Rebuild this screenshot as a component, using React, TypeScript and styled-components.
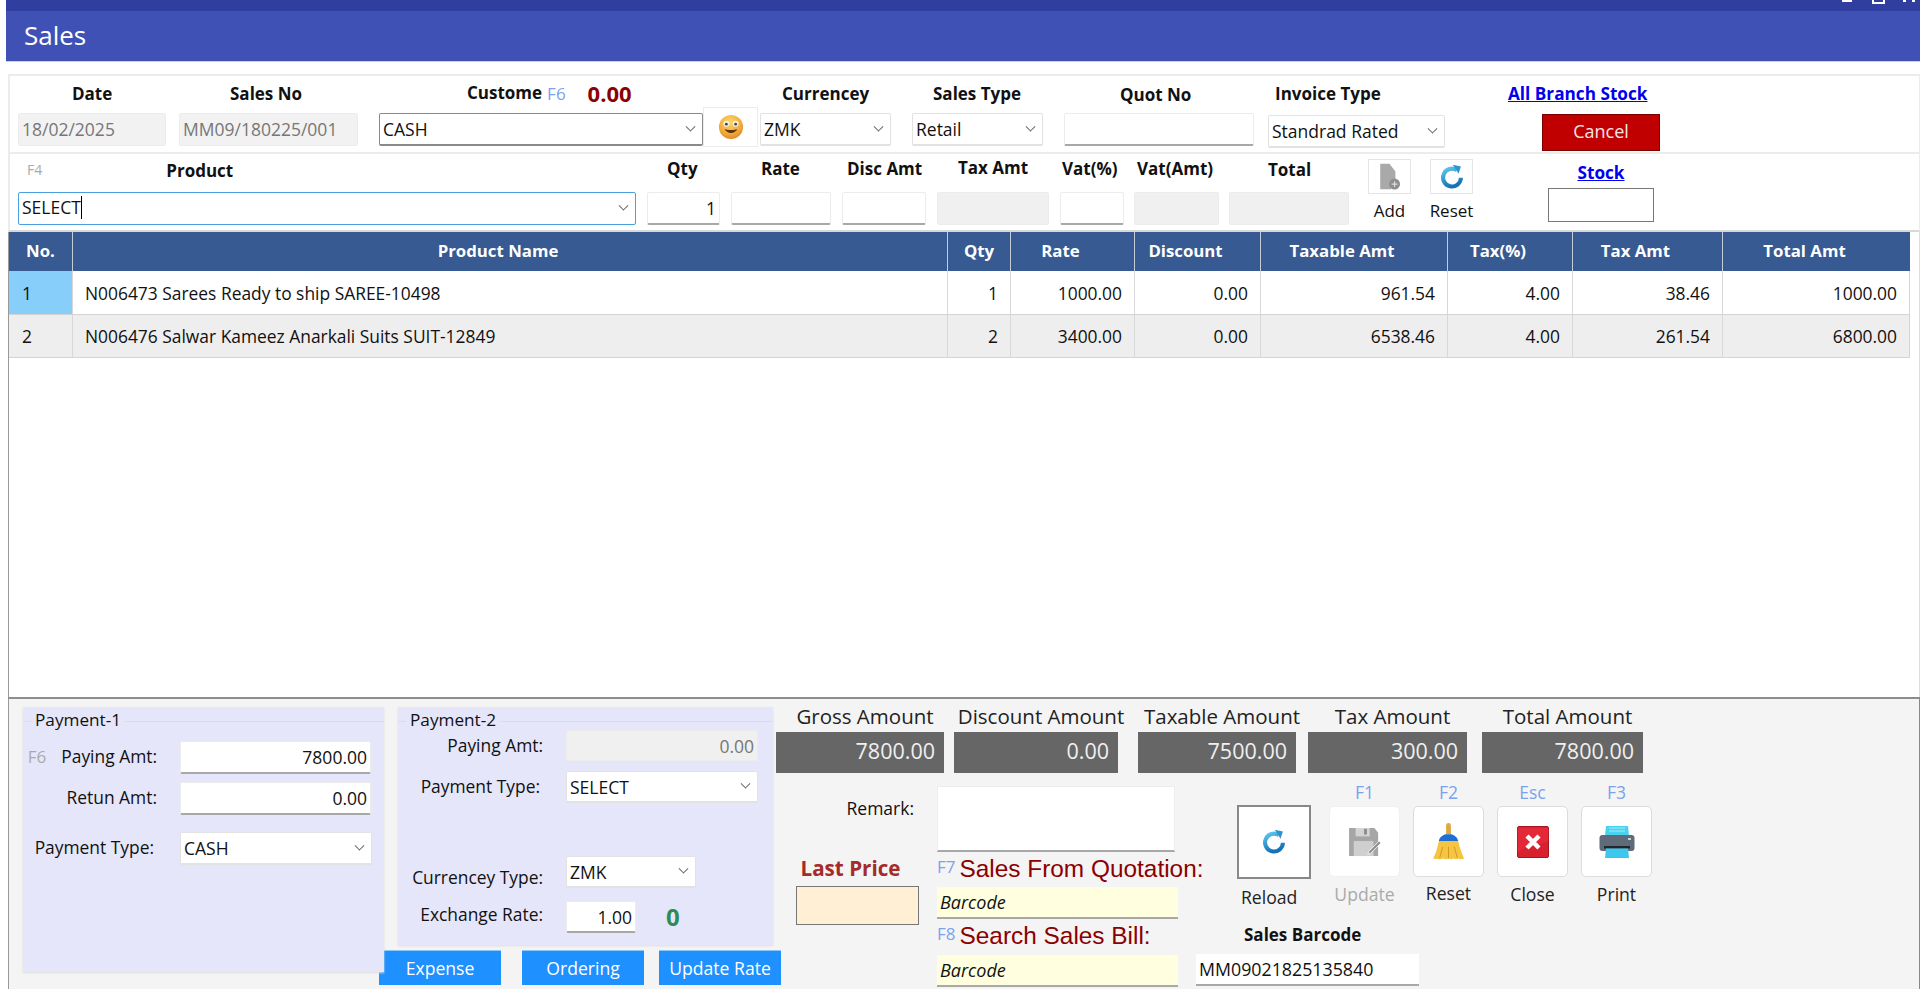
import React from "react";
import styled, { createGlobalStyle } from "styled-components";

const Global = createGlobalStyle`
  html, body { margin: 0; padding: 0; background: #fff; height: 989px; overflow: hidden; }
  * { box-sizing: border-box; }
  body { font-family: "Open Sans", "Noto Sans", sans-serif; color: #111; }
  #root { height: 989px; }
`;

const Page = styled.div`
  width: 1920px;
  height: 989px;
  overflow: hidden;
  padding-left: 6px;
  display: flex;
  flex-direction: column;
  position: relative;
`;
const TopStrip = styled.div`
  height: 11px;
  background: #303f9f;
  flex: none;
`;
const WindowGlyphs = styled.div`
  position: absolute;
  top: 0;
  right: 5px;
  display: flex;
  align-items: flex-start;
`;
const MinGlyph = styled.span`
  width: 10px;
  height: 2px;
  background: #fff;
`;
const MaxGlyph = styled.span`
  width: 13px;
  height: 4px;
  margin: 0 18px 0 20px;
  border: 2px solid #fff;
  border-top: 0;
`;
const CloseGlyph = styled.span`
  width: 12px;
  height: 2px;
  border: solid #fff;
  border-width: 0 3px;
`;
const Header = styled.div`
  height: 51px;
  flex: none;
  background: #3f51b5;
  border-bottom: 1px solid #c9d0ea;
  color: #fff;
  font-size: 26px;
  padding: 9px 0 0 18px;
  line-height: 30px;
`;
const Form = styled.div`
  margin: 12px 0 0 2px;
  flex: 1;
  display: flex;
  flex-direction: column;
  min-height: 0;
`;
const Row = styled.div<{ $h: number }>`
  height: ${(p) => p.$h}px;
  flex: none;
  border: 2px solid #ececec;
  border-right-width: 1px;
  position: relative;
  display: flex;
  padding-left: 8px;
`;
const SecondRow = styled(Row)`
  border-top: 0;
  border-bottom-width: 2px;
  border-bottom-color: #d8d8d8;
`;
const Field = styled.div<{ $w: number; $ml?: number }>`
  width: ${(p) => p.$w}px;
  margin-left: ${(p) => p.$ml ?? 0}px;
  flex: none;
  display: flex;
  flex-direction: column;
  align-items: stretch;
`;
const Label = styled.div<{ $h?: number; $dx?: number; $pt?: number }>`
  height: ${(p) => p.$h ?? 37}px;
  padding-top: ${(p) => p.$pt ?? 8}px;
  padding-left: ${(p) => p.$dx ?? 0}px;
  font-size: 17px;
  font-weight: 700;
  line-height: 20px;
  white-space: nowrap;
  display: flex;
  gap: 5px;
  align-items: baseline;
`;
const CustomerTitle = styled.span`
  transform: translateY(-1px);
`;
const HintBlue = styled.span`
  font-weight: 400;
  font-size: 17px;
  color: #7aa3ee;
`;
const HintGray = styled.span`
  font-weight: 400;
  font-size: 14px;
  color: #aaa;
`;
const ProductTitle = styled.span`
  margin-left: 119px;
  transform: translateY(2px);
`;
const Hot = styled.span`
  font-size: 22px;
  font-weight: 700;
  color: #8b0000;
  margin-left: 17px;
  transform: translateY(2px);
`;
const Input = styled.div<{ $tone?: string; $right?: boolean; $h?: number }>`
  height: ${(p) => p.$h ?? 33}px;
  background: ${(p) => p.$tone ?? "#fff"};
  border: 1px solid #ececec;
  border-bottom: ${(p) => (p.$tone ? "1px solid #ececec" : "2px solid #a8a8a8")};
  border-radius: 2px;
  font-size: 17.5px;
  line-height: 30px;
  padding: 0 3px;
  text-align: ${(p) => (p.$right ? "right" : "left")};
  white-space: nowrap;
  overflow: hidden;
  color: ${(p) => (p.$tone ? "#777" : "#111")};
`;
const SelectBox = styled.div<{ $mode?: "dark" | "focus" | "plain"; $h?: number }>`
  height: ${(p) => p.$h ?? 33}px;
  background: #fff;
  border: ${(p) =>
    p.$mode === "dark" ? "1px solid #8a8a8a" : p.$mode === "focus" ? "1px solid #4a9fe0" : "1px solid #e2e2e2"};
  border-bottom-width: ${(p) => (p.$mode === "focus" ? 1 : 2)}px;
  border-radius: 2px;
  display: flex;
  align-items: center;
  justify-content: space-between;
  font-size: 17.5px;
  padding: 0 8px 0 3px;
  white-space: nowrap;
`;
const Caret = styled.i`
  display: inline-block;
  width: 7px;
  height: 7px;
  border-right: 1px solid #666;
  border-bottom: 1px solid #666;
  transform: rotate(45deg) translate(-2px, -2px);
  flex: none;
`;
const EditingText = styled.span`
  display: inline-flex;
  align-items: center;
  line-height: 23px;
  height: 23px;
  transform: translateY(-1px);
`;
const TextCursor = styled.span`
  display: block;
  width: 1px;
  height: 23px;
  background: #000;
`;
const FaceButton = styled.div`
  width: 55px;
  height: 40px;
  margin-top: 31px;
  flex: none;
  background: #fff;
  border: 1px solid #ececec;
  display: flex;
  align-items: center;
  justify-content: center;
`;
const LinkLabel = styled.div<{ $mt: number }>`
  color: #0000ee;
  font-weight: 700;
  font-size: 17.2px;
  text-decoration: underline;
  white-space: nowrap;
  line-height: 20px;
  margin-top: ${(p) => p.$mt}px;
`;
const LinkCol = styled.div<{ $w: number; $ml: number; $center?: boolean }>`
  width: ${(p) => p.$w}px;
  margin-left: ${(p) => p.$ml}px;
  flex: none;
  display: flex;
  flex-direction: column;
  align-items: ${(p) => (p.$center ? "center" : "flex-start")};
`;
const CancelButton = styled.div`
  width: 118px;
  height: 37px;
  margin: 10px 0 0 34px;
  padding-bottom: 3px;
  background: #c00000;
  border: 1px solid #7a0000;
  color: #f5e6e6;
  font-size: 18px;
  display: flex;
  align-items: center;
  justify-content: center;
  flex: none;
`;
const StockBox = styled.div`
  width: 106px;
  height: 34px;
  margin-top: 5px;
  background: #fff;
  border: 1px solid #777;
  flex: none;
`;
const MiniCol = styled.div<{ $ml: number; $w: number }>`
  width: ${(p) => p.$w}px;
  margin-left: ${(p) => p.$ml}px;
  flex: none;
  display: flex;
  flex-direction: column;
  align-items: center;
  padding-top: 5px;
`;
const MiniBtn = styled.div`
  width: 43px;
  height: 35px;
  flex: none;
  border: 1px solid #e4e4e4;
  background: #fff;
  display: flex;
  align-items: center;
  justify-content: center;
`;
const MiniLabel = styled.div`
  font-size: 17px;
  line-height: 20px;
  margin-top: 7px;
`;

const TableArea = styled.div`
  flex: 1;
  min-height: 0;
  border-left: 1px solid #999;
  border-right: 1px solid #ddd;
  background: #fff;
`;
const Cols = "63px 875px 63px 124px 126px 187px 125px 150px 188px";
const TableRow = styled.div`
  display: grid;
  grid-template-columns: ${Cols};
`;
const Head = styled.div<{ $first?: boolean; $pr: number }>`
  height: 39px;
  background: #365a91;
  color: #fff;
  font-weight: 700;
  font-size: 16.8px;
  display: flex;
  align-items: center;
  justify-content: center;
  padding-right: ${(p) => p.$pr}px;
  border-left: ${(p) => (p.$first ? "0" : "1px solid #c4ccd8")};
  padding-bottom: 2px;
`;
const Cell = styled.div<{ $alt: boolean; $right?: boolean; $sel?: boolean }>`
  height: ${(p) => (p.$alt ? 43 : 44)}px;
  background: ${(p) => (p.$sel ? "#87cefa" : p.$alt ? "#eeeeee" : "#fff")};
  border-left: 1px solid #d8d8d8;
  border-bottom: 1px solid #d4d4d4;
  display: flex;
  align-items: center;
  justify-content: ${(p) => (p.$right ? "flex-end" : "flex-start")};
  padding: 0 12px;
  font-size: 17.4px;
  white-space: nowrap;
  &:last-child { border-right: 1px solid #d4d4d4; }
`;
const NoCell = styled(Cell)`
  padding-left: 13px;
  border-left: 0;
`;

const Bottom = styled.div`
  height: 292px;
  flex: none;
  background: #f4f4f4;
  border-top: 2px solid #8d8d8d;
  border-left: 1px solid #999;
  border-right: 1px solid #888;
  display: flex;
  padding: 8px 0 0 14px;
`;
const Fieldset = styled.div<{ $w: number; $h: number }>`
  width: ${(p) => p.$w}px;
  height: ${(p) => p.$h}px;
  flex: none;
  background: #e6e6fa;
  box-shadow: 0 1px 2px #ddd;
  position: relative;
  padding-top: 1px;
  &::before {
    content: "";
    position: absolute;
    left: 0;
    right: 0;
    top: 14px;
    border-top: 1px solid #dcdce4;
  }
`;
const Legend = styled.div`
  position: relative;
  display: inline-block;
  background: #e6e6fa;
  margin-left: 8px;
  padding: 0 4px;
  font-size: 17.2px;
  line-height: 24px;
  z-index: 1;
`;
const PayRow = styled.div<{ $top: number; $lw: number; $gap: number }>`
  display: flex;
  margin-top: ${(p) => p.$top}px;
  gap: ${(p) => p.$gap}px;
  & > :first-child { width: ${(p) => p.$lw}px; }
`;
const PayLabel = styled.div<{ $dy?: number }>`
  flex: none;
  display: flex;
  justify-content: flex-end;
  align-items: baseline;
  font-size: 17.4px;
  line-height: 32px;
  white-space: nowrap;
  transform: translateY(${(p) => p.$dy ?? -1}px);
`;
const FKey = styled.span`
  color: #aaa;
  font-size: 17px;
  margin-right: 15px;
`;
const PayCtl = styled.div<{ $w: number }>`
  width: ${(p) => p.$w}px;
  flex: none;
`;
const RateZero = styled.div`
  color: #2e8b57;
  font-weight: 700;
  font-size: 24px;
  line-height: 32px;
  margin-left: 7px;
`;
const PayCol = styled.div`
  margin-left: 14px;
  width: 375px;
  flex: none;
`;
const ActionRow = styled.div`
  display: flex;
  margin: 5px 0 0 -19px;
  gap: 21px;
  & > :last-child { margin-left: -6px; }
`;
const BlueBtn = styled.div`
  width: 122px;
  height: 35px;
  flex: none;
  background: #1e90ff;
  color: #fff;
  font-size: 17.6px;
  display: flex;
  align-items: center;
  justify-content: center;
  border-top: 1px solid #8fc6fa;
  white-space: nowrap;
`;
const RightArea = styled.div`
  margin-left: 3px;
  flex: none;
  width: 880px;
  display: flex;
  flex-direction: column;
  margin-top: -8px;
`;
const Amounts = styled.div`
  display: flex;
  height: 76px;
`;
const AmountCol = styled.div<{ $w: number; $ml: number }>`
  width: ${(p) => p.$w}px;
  margin-left: ${(p) => p.$ml}px;
  flex: none;
  display: flex;
  flex-direction: column;
`;
const AmountLabel = styled.div`
  display: flex;
  justify-content: center;
  padding-left: 10px;
  font-size: 20.5px;
  line-height: 34px;
  height: 33px;
  white-space: nowrap;
  color: #222;
`;
const AmountBox = styled.div`
  height: 41px;
  background: #666;
  color: #f0f0f0;
  font-size: 21.5px;
  text-align: right;
  line-height: 38px;
  padding-right: 9px;
`;
const Lower = styled.div`
  display: flex;
  position: relative;
`;
const LastCol = styled.div`
  width: 123px;
  margin-left: 20px;
  flex: none;
  display: flex;
  flex-direction: column;
`;
const RemarkLabel = styled.div`
  font-size: 17.5px;
  text-align: right;
  height: 20px;
  margin-top: 23px;
  padding-right: 5px;
  line-height: 20px;
`;
const LastLabel = styled.div`
  margin-top: 36px;
  padding-right: 14px;
  color: #a52a2a;
  font-weight: 700;
  font-size: 20.6px;
  line-height: 28px;
  height: 32px;
  text-align: center;
  white-space: nowrap;
`;
const LastBox = styled.div`
  height: 39px;
  background: #ffefd5;
  border: 1px solid #777;
`;
const MidCol = styled.div`
  margin-left: 18px;
  width: 259px;
  flex: none;
  display: flex;
  flex-direction: column;
`;
const RemarkBox = styled.div`
  width: 238px;
  height: 66px;
  margin-top: 11px;
  background: #fff;
  border: 1px solid #ededed;
  border-bottom: 2px solid #a8a8a8;
`;
const BigTitle = styled.div<{ $h: number }>`
  height: ${(p) => p.$h}px;
  display: flex;
  align-items: baseline;
  font-family: "Liberation Sans", Arial, sans-serif;
  font-size: 24.4px;
  color: #8b0000;
  white-space: nowrap;
  line-height: 34px;
`;
const BlueKey = styled.span`
  font-size: 17px;
  color: #7aa3ee;
  margin-right: 4px;
  font-family: "Open Sans", sans-serif;
  transform: translateY(-4px);
`;
const Yellow = styled.div`
  width: 241px;
  height: 32px;
  background: #ffffe0;
  border-bottom: 2px solid #a8a8a8;
  font-style: italic;
  font-size: 18px;
  line-height: 30px;
  padding-left: 3px;
`;
const RightStack = styled.div`
  flex: none;
  display: flex;
  flex-direction: column;
`;
const KeyButtons = styled.div`
  display: flex;
  margin: 0 0 0 41px;
  align-items: flex-start;
`;
const ReloadCol = styled.div`
  width: 74px;
  flex: none;
  padding-top: 30px;
`;
const Reload = styled.div`
  width: 74px;
  height: 74px;
  background: #fff;
  border: 2px solid #888;
  display: flex;
  align-items: center;
  justify-content: center;
`;
const KeyCol = styled.div<{ $ml: number }>`
  margin-left: ${(p) => p.$ml}px;
  width: 71px;
  flex: none;
  display: flex;
  flex-direction: column;
  align-items: center;
  padding-top: 6px;
`;
const KeyName = styled.div`
  font-size: 17.5px;
  color: #7aa3ee;
  line-height: 22px;
  height: 25px;
  white-space: nowrap;
`;
const KeyBtn = styled.div<{ $dim?: boolean }>`
  width: 71px;
  height: 71px;
  flex: none;
  background: #fff;
  border: 1px solid ${(p) => (p.$dim ? "#f0f0f0" : "#dcdcdc")};
  border-radius: 5px;
  display: flex;
  align-items: center;
  justify-content: center;
`;
const ButtonCaption = styled.div<{ $dim?: boolean; $mt: number; $pl?: number }>`
  font-size: 17.6px;
  color: ${(p) => (p.$dim ? "#aaa" : "#222")};
  margin-top: ${(p) => p.$mt}px;
  padding-left: ${(p) => p.$pl ?? 0}px;
  line-height: 20px;
`;
const BarcodeTitle = styled.div`
  font-size: 17px;
  font-weight: 700;
  margin: 18px 0 0 48px;
  height: 20px;
  line-height: 20px;
`;
const BarcodeInput = styled.div`
  width: 223px;
  height: 32px;
  margin-top: 9px;
  padding-left: 3px;
  background: #fff;
  border-bottom: 2px solid #a8a8a8;
  font-size: 17.8px;
  line-height: 30px;
  white-space: nowrap;
`;

const RefreshIcon = ({ id }: { id: string }) => (
  <svg width={26} height={26} viewBox="0 0 32 32">
    <defs>
      <linearGradient id={id} x1="0" y1="0" x2="0.4" y2="1">
        <stop offset="0" stopColor="#5cc6ee" />
        <stop offset="1" stopColor="#1673b8" />
      </linearGradient>
    </defs>
    <path d="M22 7.5A11 11 0 1 0 27 17" fill="none" stroke={`url(#${id})`} strokeWidth="5" />
    <path d="M17 1l10 2-3 9-3-5z" fill="#2f93cf" />
  </svg>
);
const DocAdd = () => (
  <svg width="23" height="27" viewBox="0 0 26 32">
    <path d="M2 1h11l7 9v13a8 8 0 0 0-5 8H2z" fill="#a9a9a9" />
    <circle cx="19" cy="25" r="6.5" fill="#8f8f8f" />
    <path d="M19 21.5v7M15.5 25h7" stroke="#ddd" strokeWidth="1.4" />
  </svg>
);
const Floppy = () => (
  <svg width="34" height="30" viewBox="0 0 36 32">
    <path d="M1 1h27l4 5v25H1z" fill="#a6a6a6" />
    <rect x="8" y="1" width="15" height="9" fill="#d4d4d4" />
    <rect x="17" y="2" width="3" height="6" fill="#8a8a8a" />
    <rect x="6" y="15" width="21" height="16" fill="#cfcfcf" />
    <path d="M22 26l11-11 2 2-11 11-3 1z" fill="#8e8e8e" stroke="#f2f2f2" strokeWidth="1" />
  </svg>
);
const Broom = () => (
  <svg width="33" height="40" viewBox="0 0 34 40">
    <path d="M14.5 12V3a2.5 2.5 0 0 1 5 0v9z" fill="#dfa93e" />
    <path d="M7 19c1-5 5-6 7-7h6c2 1 6 2 7 7z" fill="#1f6fd0" />
    <path d="M7 19h20c1 6 4 13 6 18-2 1-5 1-6 0-1 1-3 1-5 0-2 1-3 1-5 0-2 1-4 1-5 0-2 1-6 1-11 0 3-5 5-12 6-18z" fill="#f5c542" />
    <path d="M11 25l-3 11M17 25v12M23 25l3 11" stroke="#cf9525" strokeWidth="1" />
  </svg>
);
const CloseIcon = () => (
  <svg width="32" height="32" viewBox="0 0 32 32">
    <rect x="0.5" y="0.5" width="31" height="31" rx="1.5" fill="#d9202f" stroke="#a51622" />
    <path d="M0.5 2h31v13C20 20 10 20 .5 26z" fill="#ea3040" opacity=".6" />
    <path d="M10 10l12 12M22 10L10 22" stroke="#fff" strokeWidth="4.5" />
  </svg>
);
const Printer = () => (
  <svg width="36" height="34" viewBox="0 0 36 34">
    <path d="M7 1h22l1 10H6z" fill="#49d2ee" />
    <path d="M10 3h16M10 6h16" stroke="#a6ecf9" strokeWidth="1" />
    <rect x="0.5" y="10" width="35" height="16" rx="3" fill="#5f6b78" />
    <rect x="29" y="13" width="3" height="2" fill="#c7d3dc" />
    <rect x="5" y="21" width="26" height="2.5" fill="#20262c" />
    <path d="M7 23.5h22L30 33H6z" fill="#3cc7ec" />
  </svg>
);
const Face = () => (
  <svg width="26" height="26" viewBox="0 0 28 28">
    <defs>
      <radialGradient id="fc" cx="0.45" cy="0.3" r="0.8">
        <stop offset="0" stopColor="#fbd869" />
        <stop offset="0.6" stopColor="#f2a93c" />
        <stop offset="1" stopColor="#d97a1c" />
      </radialGradient>
    </defs>
    <circle cx="14" cy="14" r="13" fill="url(#fc)" />
    <circle cx="9" cy="10.5" r="3.2" fill="#f4f1e6" />
    <circle cx="19" cy="10.5" r="3.2" fill="#f4f1e6" />
    <circle cx="9" cy="11" r="1.5" fill="#444" />
    <circle cx="19" cy="11" r="1.5" fill="#444" />
    <path d="M8 17c3 4 9 4 12 0-3 1.2-9 1.2-12 0z" fill="#5a2d0c" stroke="#5a2d0c" />
  </svg>
);

const heads: [string, number][] = [
  ["No.", 0],
  ["Product Name", 24],
  ["Qty", 0],
  ["Rate", 24],
  ["Discount", 24],
  ["Taxable Amt", 24],
  ["Tax(%)", 24],
  ["Tax Amt", 24],
  ["Total Amt", 24],
];
const rows = [
  ["1", "N006473 Sarees Ready to ship SAREE-10498", "1", "1000.00", "0.00", "961.54", "4.00", "38.46", "1000.00"],
  ["2", "N006476 Salwar Kameez Anarkali Suits SUIT-12849", "2", "3400.00", "0.00", "6538.46", "4.00", "261.54", "6800.00"],
];
const amounts: [string, string, number, number][] = [
  ["Gross Amount", "7800.00", 168, 0],
  ["Discount Amount", "0.00", 164, 10],
  ["Taxable Amount", "7500.00", 158, 20],
  ["Tax Amount", "300.00", 159, 12],
  ["Total Amount", "7800.00", 161, 15],
];

export default function App() {
  return (
    <Page>
      <Global />
      <TopStrip />
      <WindowGlyphs>
        <MinGlyph />
        <MaxGlyph />
        <CloseGlyph />
      </WindowGlyphs>
      <Header>Sales</Header>
      <Form>
        <Row $h={80}>
          <Field $w={148}>
            <Label $dx={54}>Date</Label>
            <Input $tone="#f2f2f2">18/02/2025</Input>
          </Field>
          <Field $w={179} $ml={13}>
            <Label $dx={51}>Sales No</Label>
            <Input $tone="#f2f2f2">MM09/180225/001</Input>
          </Field>
          <Field $w={324} $ml={21}>
            <Label $dx={88} $pt={5}>
              <CustomerTitle>Custome</CustomerTitle>
              <HintBlue>F6</HintBlue>
              <Hot>0.00</Hot>
            </Label>
            <SelectBox $mode="dark">
              CASH
              <Caret />
            </SelectBox>
          </Field>
          <FaceButton>
            <Face />
          </FaceButton>
          <Field $w={131} $ml={2}>
            <Label $dx={22}>Currencey</Label>
            <SelectBox>
              ZMK
              <Caret />
            </SelectBox>
          </Field>
          <Field $w={131} $ml={21}>
            <Label $dx={21}>Sales Type</Label>
            <SelectBox>
              Retail
              <Caret />
            </SelectBox>
          </Field>
          <Field $w={190} $ml={21}>
            <Label $dx={56} $pt={9}>Quot No</Label>
            <Input />
          </Field>
          <Field $w={177} $ml={14}>
            <Label $h={39} $dx={7}>Invoice Type</Label>
            <SelectBox>
              Standrad Rated
              <Caret />
            </SelectBox>
          </Field>
          <LinkCol $w={152} $ml={63}>
            <LinkLabel $mt={8}>All Branch Stock</LinkLabel>
            <CancelButton>Cancel</CancelButton>
          </LinkCol>
        </Row>
        <SecondRow $h={78}>
          <Field $w={618}>
            <Label $h={38} $dx={9} $pt={5}>
              <HintGray>F4</HintGray>
              <ProductTitle>Product</ProductTitle>
            </Label>
            <SelectBox $mode="focus">
              <EditingText>
                SELECT
                <TextCursor />
              </EditingText>
              <Caret />
            </SelectBox>
          </Field>
          <Field $w={73} $ml={11}>
            <Label $h={38} $dx={20} $pt={5}>Qty</Label>
            <Input $right>1</Input>
          </Field>
          <Field $w={100} $ml={11}>
            <Label $h={38} $dx={30} $pt={5}>Rate</Label>
            <Input />
          </Field>
          <Field $w={84} $ml={11}>
            <Label $h={38} $dx={5} $pt={5}>Disc Amt</Label>
            <Input />
          </Field>
          <Field $w={112} $ml={11}>
            <Label $h={38} $dx={21} $pt={4}>Tax Amt</Label>
            <Input $tone="#f0f0f0" />
          </Field>
          <Field $w={64} $ml={11}>
            <Label $h={38} $dx={2} $pt={5}>Vat(%)</Label>
            <Input />
          </Field>
          <Field $w={85} $ml={10}>
            <Label $h={38} $dx={3} $pt={5}>Vat(Amt)</Label>
            <Input $tone="#f0f0f0" />
          </Field>
          <Field $w={120} $ml={10}>
            <Label $h={38} $dx={39} $pt={6}>Total</Label>
            <Input $tone="#f0f0f0" />
          </Field>
          <MiniCol $w={43} $ml={19}>
            <MiniBtn>
              <DocAdd />
            </MiniBtn>
            <MiniLabel>Add</MiniLabel>
          </MiniCol>
          <MiniCol $w={43} $ml={19}>
            <MiniBtn>
              <RefreshIcon id="rfa" />
            </MiniBtn>
            <MiniLabel>Reset</MiniLabel>
          </MiniCol>
          <LinkCol $w={106} $ml={75} $center>
            <LinkLabel $mt={9}>Stock</LinkLabel>
            <StockBox />
          </LinkCol>
        </SecondRow>
        <TableArea>
          <TableRow>
            {heads.map(([h, pr], i) => (
              <Head key={h} $first={i === 0} $pr={pr}>
                {h}
              </Head>
            ))}
          </TableRow>
          {rows.map((r, ri) => (
            <TableRow key={r[0]}>
              <NoCell $alt={ri === 1} $sel={ri === 0}>
                {r[0]}
              </NoCell>
              {r.slice(1).map((c, i) => (
                <Cell key={i} $alt={ri === 1} $right={i > 0}>
                  {c}
                </Cell>
              ))}
            </TableRow>
          ))}
        </TableArea>
        <Bottom>
          <Fieldset $w={361} $h={265}>
            <Legend>Payment-1</Legend>
            <PayRow $top={9} $lw={134} $gap={23}>
              <PayLabel>
                <FKey>F6</FKey>Paying Amt:
              </PayLabel>
              <PayCtl $w={191}>
                <Input $right>7800.00</Input>
              </PayCtl>
            </PayRow>
            <PayRow $top={8} $lw={134} $gap={23}>
              <PayLabel>Retun Amt:</PayLabel>
              <PayCtl $w={191}>
                <Input $right>0.00</Input>
              </PayCtl>
            </PayRow>
            <PayRow $top={17} $lw={131} $gap={26}>
              <PayLabel>Payment Type:</PayLabel>
              <PayCtl $w={192}>
                <SelectBox>
                  CASH
                  <Caret />
                </SelectBox>
              </PayCtl>
            </PayRow>
          </Fieldset>
          <PayCol>
            <Fieldset $w={375} $h={238}>
              <Legend>Payment-2</Legend>
              <PayRow $top={-2} $lw={145} $gap={23}>
                <PayLabel>Paying Amt:</PayLabel>
                <PayCtl $w={192}>
                  <Input $tone="#f0f0f0" $right $h={31}>0.00</Input>
                </PayCtl>
              </PayRow>
              <PayRow $top={9} $lw={142} $gap={26}>
                <PayLabel>Payment Type:</PayLabel>
                <PayCtl $w={192}>
                  <SelectBox $h={32}>
                    SELECT
                    <Caret />
                  </SelectBox>
                </PayCtl>
              </PayRow>
              <PayRow $top={53} $lw={145} $gap={23}>
                <PayLabel $dy={5}>Currencey Type:</PayLabel>
                <PayCtl $w={130}>
                  <SelectBox $h={32}>
                    ZMK
                    <Caret />
                  </SelectBox>
                </PayCtl>
              </PayRow>
              <PayRow $top={13} $lw={145} $gap={23}>
                <PayLabel $dy={-3}>Exchange Rate:</PayLabel>
                <PayCtl $w={70}>
                  <Input $right $h={32}>1.00</Input>
                </PayCtl>
                <RateZero>0</RateZero>
              </PayRow>
            </Fieldset>
            <ActionRow>
              <BlueBtn>Expense</BlueBtn>
              <BlueBtn>Ordering</BlueBtn>
              <BlueBtn>Update Rate</BlueBtn>
            </ActionRow>
          </PayCol>
          <RightArea>
            <Amounts>
              {amounts.map(([l, v, w, ml]) => (
                <AmountCol key={l} $w={w} $ml={ml}>
                  <AmountLabel>{l}</AmountLabel>
                  <AmountBox>{v}</AmountBox>
                </AmountCol>
              ))}
            </Amounts>
            <Lower>
              <LastCol>
                <RemarkLabel>Remark:</RemarkLabel>
                <LastLabel>Last Price</LastLabel>
                <LastBox />
              </LastCol>
              <MidCol>
                <RemarkBox />
                <BigTitle $h={35}>
                  <BlueKey>F7</BlueKey>Sales From Quotation:
                </BigTitle>
                <Yellow>Barcode</Yellow>
                <BigTitle $h={36}>
                  <BlueKey>F8</BlueKey>Search Sales Bill:
                </BigTitle>
                <Yellow>Barcode</Yellow>
              </MidCol>
              <RightStack>
                <KeyButtons>
                  <ReloadCol>
                    <Reload>
                      <RefreshIcon id="rfb" />
                    </Reload>
                    <ButtonCaption $mt={8} $pl={4}>Reload</ButtonCaption>
                  </ReloadCol>
                  <KeyCol $ml={18}>
                    <KeyName>F1</KeyName>
                    <KeyBtn $dim>
                      <Floppy />
                    </KeyBtn>
                    <ButtonCaption $dim $mt={7}>Update</ButtonCaption>
                  </KeyCol>
                  <KeyCol $ml={13}>
                    <KeyName>F2</KeyName>
                    <KeyBtn>
                      <Broom />
                    </KeyBtn>
                    <ButtonCaption $mt={6}>Reset</ButtonCaption>
                  </KeyCol>
                  <KeyCol $ml={13}>
                    <KeyName>Esc</KeyName>
                    <KeyBtn>
                      <CloseIcon />
                    </KeyBtn>
                    <ButtonCaption $mt={7}>Close</ButtonCaption>
                  </KeyCol>
                  <KeyCol $ml={13}>
                    <KeyName>F3</KeyName>
                    <KeyBtn>
                      <Printer />
                    </KeyBtn>
                    <ButtonCaption $mt={7}>Print</ButtonCaption>
                  </KeyCol>
                </KeyButtons>
                <BarcodeTitle>Sales Barcode</BarcodeTitle>
                <BarcodeInput>MM09021825135840</BarcodeInput>
              </RightStack>
            </Lower>
          </RightArea>
        </Bottom>
      </Form>
    </Page>
  );
}
